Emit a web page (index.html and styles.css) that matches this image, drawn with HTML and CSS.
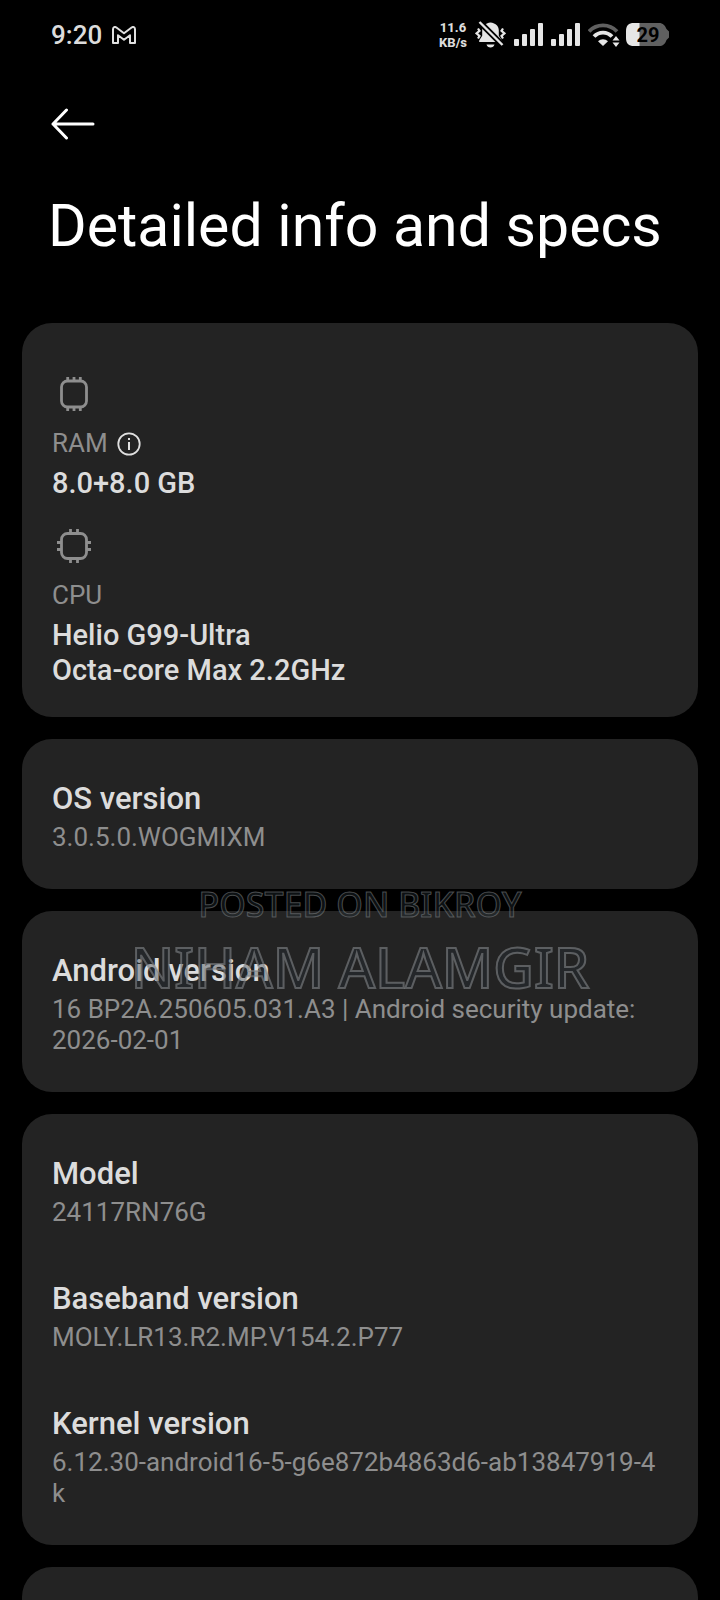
FILE: index.html
```html
<!DOCTYPE html>
<html lang="en">
<head>
    <meta charset="UTF-8">
    <meta name="viewport" content="width=device-width, initial-scale=1.0">
    <title>Detailed info and specs</title>
    <link rel="stylesheet" href="styles.css">
</head>
<body>
    <div class="page">
        <div class="status-bar">
            <span class="time">9:20</span>
            <svg class="mail-icon" width="24" height="18" viewBox="0 0 24 18" fill="none" stroke="#e0e0e0" stroke-width="2" stroke-linejoin="round">
                <path d="M1 3.200C1 1.200 2.800.4 4.400 1.500L12 7.300l7.600-5.800C21.200.4 23 1.200 23 3.200V17H18V9.200L12 13.700 6 9.200V17H1z"/>
            </svg>
            <div class="status-icons">
                <div class="speed">11.6<br>KB/s</div>
                <!-- muted bell -->
                <svg width="31" height="28" viewBox="0 0 31 28">
                    <path fill="#e6e6e6" d="M15.500 1.500c1.300 0 2.200.2 3 .8 3 1 5.300 3.600 5.300 7v5.500l3 4.600v1.600H4.200v-1.600l3-4.600v-5.500c0-3.400 2.300-6 5.300-7 .8-.6 1.700-.8 3-.8zM11.500 23.500h8c-.5 1.900-2 3-4 3s-3.500-1.100-4-3z"/>
                    <path fill="none" stroke="#e6e6e6" stroke-width="2.200" d="M3 7.500l1.500 2.300-3 2.600 3 2.600L3 17.500M28 7.500l-1.500 2.300 3 2.600-3 2.600 1.500 2.500"/>
                    <path stroke="#000" stroke-width="6" d="M5 1.500L27.500 24"/>
                    <path stroke="#e6e6e6" stroke-width="2.400" d="M4.500 1L27.500 24"/>
                </svg>
                <svg class="signal" width="29" height="24" viewBox="0 0 29 24" fill="#e6e6e6">
                    <rect x="0" y="16" width="5" height="7" rx="1"/>
                    <rect x="8" y="11" width="5" height="12" rx="1"/>
                    <rect x="16" y="6" width="5" height="17" rx="1"/>
                    <rect x="24" y="0" width="5" height="23" rx="1"/>
                </svg>
                <svg class="signal" width="29" height="24" viewBox="0 0 29 24" fill="#e6e6e6">
                    <rect x="0" y="16" width="5" height="7" rx="1"/>
                    <rect x="8" y="11" width="5" height="12" rx="1"/>
                    <rect x="16" y="6" width="5" height="17" rx="1"/>
                    <rect x="24" y="0" width="5" height="23" rx="1"/>
                </svg>
                <svg class="wifi" width="32" height="24" viewBox="0 0 32 24" fill="none">
                    <path stroke="#606060" stroke-width="3.800" d="M1 8.500C8.500.3 21.500.3 29 8.500"/>
                    <path stroke="#e6e6e6" stroke-width="3.800" d="M6 13.500c5-5.300 13-5.300 18 0"/>
                    <path fill="#e6e6e6" d="M10 18.200c2.800-2.700 7.200-2.700 10 0L15 23z"/>
                    <path fill="#e6e6e6" d="M24.500 17.500l3.500-4.500 3.500 4.500zM24.500 19.500l3.500 4.500 3.500-4.500z"/>
                </svg>
                <div class="battery">
                    <svg width="44" height="24" viewBox="0 0 44 24">
                        <path fill="#606060" d="M9 0h24c4 0 6 2.500 7.500 6l2.500 2.500v6L40.500 17c-1.500 4-3.500 6-7.500 6H9z"/>
                        <path fill="#e6e6e6" d="M13.500 0v23H8c-5.500 0-8-2.500-8-8V8c0-5.500 2.500-8 8-8z"/>
                    </svg>
                    <span class="battery-level">29</span>
                </div>
            </div>
        </div>

        <div class="header">
            <button class="back" aria-label="Back">
                <svg width="44" height="32" viewBox="0 0 44 32" fill="none" stroke="#fff" stroke-width="3" stroke-linecap="round" stroke-linejoin="round">
                    <path d="M15.500 2L2 16l13.500 14M2 16h40"/>
                </svg>
            </button>
            <h1>Detailed info and specs</h1>
        </div>

        <div class="cards">
            <div class="card hardware">
                <div class="spec">
                    <svg class="chip" width="44" height="44" viewBox="0 0 44 44" fill="none" stroke="#8e8e8e" stroke-width="2.800">
                        <rect x="9.500" y="9" width="25" height="26" rx="6"/>
                        <path d="M15.700 9V5M22 9V5M28.300 9V5M15.700 35v4M22 35v4M28.300 35v4"/>
                    </svg>
                    <div class="label">RAM
                        <button class="info" aria-label="About RAM">
                            <svg width="24" height="24" viewBox="0 0 24 24" fill="none" stroke="#e0e0e0">
                                <circle cx="12" cy="12" r="10.700" stroke-width="1.800"/>
                                <path stroke-width="2" d="M12 10v8M12 6v2"/>
                            </svg>
                        </button>
                    </div>
                    <div class="value">8.0+8.0 GB</div>
                </div>
                <div class="spec">
                    <svg class="chip" width="44" height="44" viewBox="0 0 44 44" fill="none" stroke="#8e8e8e" stroke-width="2.800">
                        <rect x="9.500" y="9.500" width="25" height="25" rx="6"/>
                        <path d="M18.500 9.500V5M25.500 9.500V5M18.500 34.500V39M25.500 34.500V39M9.500 18.500H5M9.500 25.500H5M34.500 18.500H39M34.500 25.500H39"/>
                    </svg>
                    <div class="label">CPU</div>
                    <div class="value">Helio G99-Ultra<br>Octa-core Max 2.2GHz</div>
                </div>
            </div>

            <div class="card">
                <div class="item">
                    <h2>OS version</h2>
                    <p>3.0.5.0.WOGMIXM</p>
                </div>
            </div>

            <div class="card marked">
                <div class="item">
                    <h2>Android version</h2>
                    <p>16 BP2A.250605.031.A3 | Android security update: 2026-02-01</p>
                </div>
                <div class="watermark">
                    <div class="posted">POSTED ON BIKROY</div>
                    <div class="name">NIHAM ALAMGIR</div>
                </div>
            </div>

            <div class="card">
                <div class="item">
                    <h2>Model</h2>
                    <p>24117RN76G</p>
                </div>
                <div class="item">
                    <h2>Baseband version</h2>
                    <p>MOLY.LR13.R2.MP.V154.2.P77</p>
                </div>
                <div class="item">
                    <h2>Kernel version</h2>
                    <p class="kernel">6.12.30-android16-5-g6e872b4863d6-ab13847919-4k</p>
                </div>
            </div>

            <div class="card next"></div>
        </div>
    </div>
</body>
</html>
```

FILE: styles.css
```css
* {
    box-sizing: border-box;
}
body {
    font-family: Roboto, sans-serif;
    margin: 0;
    background: #000;
    color: #dcdcdc;
}
h1, h2, p {
    margin: 0;
}
button {
    display: flex;
    padding: 0;
    border: none;
    background: none;
    cursor: pointer;
}
svg {
    display: block;
}
.page {
    display: flex;
    flex-direction: column;
    min-height: 100vh;
}
.status-bar {
    display: flex;
    align-items: center;
    height: 70px;
    padding: 0 50px 0 51px;
}
.time {
    font-size: 26px;
    font-weight: 500;
}
.mail-icon {
    margin-left: 10px;
}
.status-icons {
    display: flex;
    align-items: center;
    gap: 8px;
    margin-left: auto;
}
.speed {
    font-size: 13px;
    font-weight: 800;
    line-height: 15px;
    text-align: center;
}
.wifi {
    margin-right: -2px;
}
.battery {
    position: relative;
}
.battery-level {
    position: absolute;
    inset: 0;
    color: #000;
    font-size: 20px;
    font-weight: 700;
    line-height: 24px;
    text-align: center;
}
.header {
    padding: 38px 48px 0;
}
.back {
    padding: 0 3px;
}
h1 {
    margin-top: 50px;
    color: #fff;
    font-size: 59px;
    font-weight: 400;
    line-height: 72px;
}
.cards {
    display: flex;
    flex-direction: column;
    flex: 1;
    gap: 22px;
    margin: 61px 22px 0;
}
.card {
    display: flex;
    flex-direction: column;
    gap: 52px;
    padding: 41px 30px 36px;
    background: #232323;
    border-radius: 30px;
}
.hardware {
    gap: 23px;
    padding: 49px 30px 29px;
}
.label {
    display: flex;
    align-items: center;
    gap: 9px;
    margin-top: 12px;
    color: #8e8e8e;
    font-size: 26px;
    line-height: 31px;
}
.value {
    margin-top: 7px;
    font-size: 29px;
    font-weight: 500;
    line-height: 35px;
}
h2 {
    font-size: 31px;
    font-weight: 500;
    line-height: 38px;
}
.item p {
    margin-top: 4px;
    color: #8e8e8e;
    font-size: 26px;
    line-height: 31px;
}
.item .kernel {
    word-break: break-all;
}
.marked {
    position: relative;
}
/* outlined text lying over the cards */
.watermark {
    position: absolute;
    top: -32px;
    left: 0;
    right: 0;
    color: rgba(40, 50, 58, 0.35);
    font-family: "Noto Sans", sans-serif;
    font-weight: 500;
    text-align: center;
    white-space: nowrap;
    pointer-events: none;
}
.posted {
    font-size: 34px;
    line-height: 50px;
    -webkit-text-stroke: 1px rgba(130, 134, 137, 0.55);
}
.name {
    font-size: 56px;
    line-height: 74px;
    -webkit-text-stroke: 2px rgba(130, 134, 137, 0.6);
}
.next {
    flex: 1;
    padding: 0;
    border-radius: 30px 30px 0 0;
}
```
